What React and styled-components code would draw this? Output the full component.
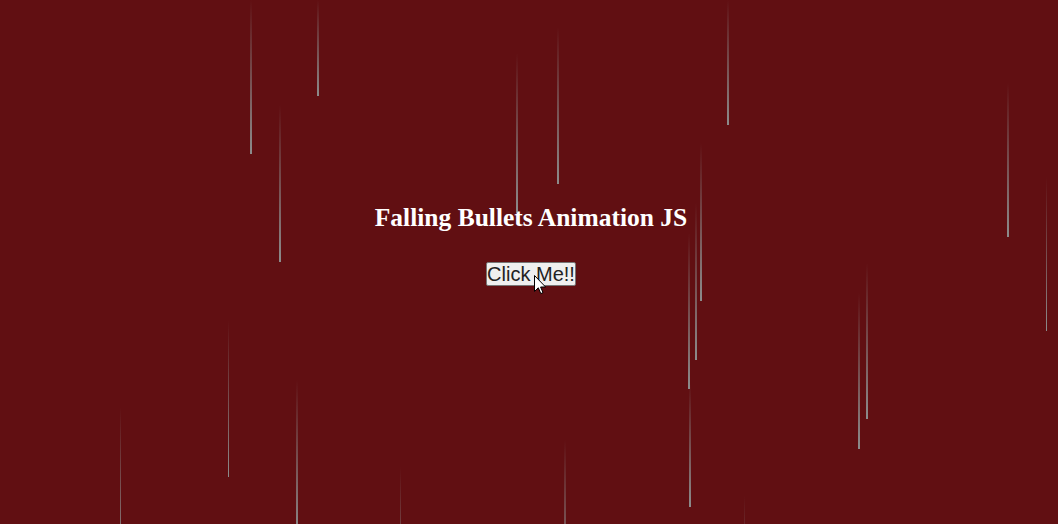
import styled, { createGlobalStyle } from "styled-components";

const bullets = [
    { x: 250, top: 0, bottom: 154, w: 2 },
    { x: 317, top: 0, bottom: 96, w: 2 },
    { x: 279, top: 105, bottom: 262, w: 2 },
    { x: 516, top: 53, bottom: 213, w: 2 },
    { x: 557, top: 27, bottom: 184, w: 2 },
    { x: 727, top: 0, bottom: 125, w: 2 },
    { x: 700, top: 143, bottom: 301, w: 2 },
    { x: 695, top: 203, bottom: 360, w: 2 },
    { x: 688, top: 233, bottom: 389, w: 2 },
    { x: 689, top: 383, bottom: 507, w: 2 },
    { x: 858, top: 293, bottom: 449, w: 2 },
    { x: 866, top: 263, bottom: 419, w: 2 },
    { x: 1007, top: 83, bottom: 237, w: 2 },
    { x: 1046, top: 177, bottom: 331, w: 1 },
    { x: 120, top: 407, bottom: 560, w: 1 },
    { x: 228, top: 320, bottom: 477, w: 1 },
    { x: 296, top: 380, bottom: 536, w: 2 },
    { x: 400, top: 467, bottom: 620, w: 1 },
    { x: 564, top: 440, bottom: 595, w: 2 },
    { x: 744, top: 495, bottom: 650, w: 1 },
];

export default function App() {
    return (
        <>
            <GlobalStyle />
            <Stage>
                {bullets.map((b, i) => (
                    <Bullet
                        key={i}
                        $x={b.x}
                        $top={b.top}
                        $height={b.bottom - b.top}
                        $w={b.w}
                    />
                ))}

                <Main>
                    <Title>Falling Bullets Animation JS</Title>
                    <ButtonWrap>
                        <Button>Click Me!!</Button>
                        <Cursor width="13" height="20" viewBox="0 0 13 20">
                            <path
                                d="M0.5 0.5 L0.5 16.5 L4.3 12.8 L6.8 18.6 L9 17.6 L6.6 12 L11.6 12 Z"
                                fill="#fff"
                                stroke="#000"
                                strokeWidth="1"
                                strokeLinejoin="round"
                            />
                        </Cursor>
                    </ButtonWrap>
                </Main>
            </Stage>
        </>
    );
}

const GlobalStyle = createGlobalStyle`
html, body {
    margin: 0;
    padding: 0;
}
body {
    background-color: #610f12;
    overflow: hidden;
}
`;

const Stage = styled.div`
width: 1058px;
height: 524px;
position: relative;
overflow: hidden;

background-color: #610f12;
`;

const Bullet = styled.div`
position: absolute;
left: ${(p) => p.$x}px;
top: ${(p) => p.$top}px;
width: ${(p) => p.$w}px;
height: ${(p) => p.$height}px;

background: linear-gradient(to bottom, rgba(140, 140, 140, 0), #8c8c8c);
`;

const Main = styled.div`
position: relative;
padding-top: 203px;
padding-left: 4px;

display: flex;
flex-direction: column;
align-items: center;
`;

const Title = styled.h2`
margin: 0 0 29px 0;
font-family: "Liberation Serif", "Times New Roman", serif;
font-size: 25.5px;
font-weight: 700;
line-height: 30px;
color: #fff;
`;

const ButtonWrap = styled.div`
position: relative;
`;

const Button = styled.button`
height: 24px;
padding: 0;
margin: 0;

font-family: "Liberation Sans", Arial, sans-serif;
font-size: 20px;
line-height: 22px;
color: #222;

background-color: #efefef;
border: 1px solid #767676;
border-radius: 2px;
`;

const Cursor = styled.svg`
position: absolute;
left: 48px;
top: 13px;
`;
